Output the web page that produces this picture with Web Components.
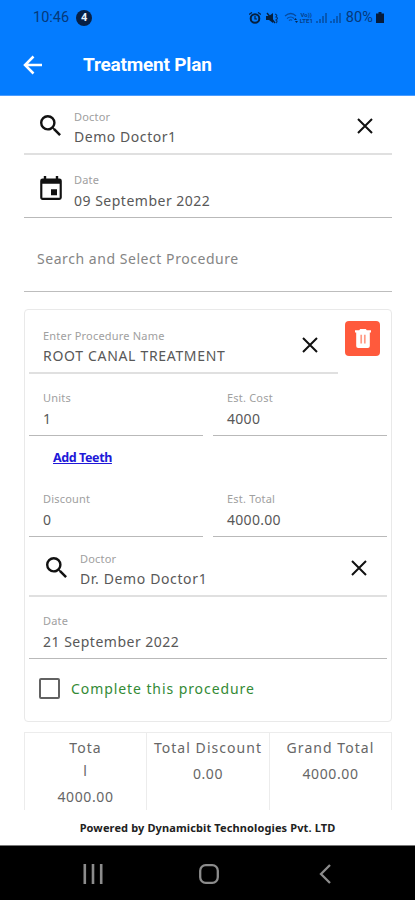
<!DOCTYPE html>
<html lang="en">
<head>
<meta charset="utf-8">
<title>Treatment Plan</title>
<style>
  html, body { margin: 0; height: 100%; background: #fff; }
  body { font-family: "Noto Sans", "Open Sans", sans-serif; color: #555; }
</style>
</head>
<body>
<treatment-plan></treatment-plan>
<script>
const define = (name, html) => customElements.define(name, class extends HTMLElement {
  constructor() {
    super();
    const t = document.createElement('template');
    t.innerHTML = html;
    this.attachShadow({ mode: 'open' }).append(t.content.cloneNode(true));
  }
});

const icons = {
  search: '<svg viewBox="3 3 17.5 17.5" width="21" height="21"><path d="M15.5 14h-.79l-.28-.27A6.47 6.47 0 0 0 16 9.5 6.5 6.5 0 1 0 9.5 16c1.61 0 3.09-.59 4.23-1.57l.27.28v.79l5 4.99L20.49 19l-4.99-5zm-6 0a4.5 4.5 0 1 1 0-9 4.5 4.5 0 0 1 0 9z"/></svg>',
  calendar: '<svg viewBox="3 1 18 20" width="22" height="24"><path fill-rule="evenodd" d="M19 3h-1V1h-2v2H8V1H6v2H5a2 2 0 0 0-2 2v14c0 1.100.9 2 2 2h14a2 2 0 0 0 2-2V5a2 2 0 0 0-2-2zm.2 16.200H4.800V7.500h14.400zM12 12h5v5h-5z"/></svg>',
  close: '<svg viewBox="0 0 16 16" width="16" height="16"><path d="M1 1l14 14M15 1L1 15" stroke="#111" stroke-width="2" fill="none"/></svg>',
  trash: '<svg viewBox="0 0 16 19" width="16" height="19"><path fill="#fff" d="M5.200 0h5.600l1 1.200H16v2.200H0V1.200h4.200zM1.200 3.400h13.600V17a2 2 0 0 1-2 2H3.200a2 2 0 0 1-2-2z"/><path stroke="#ff9a85" stroke-width="1.700" d="M6.200 5.800v8.600M9.800 5.800v8.600"/></svg>',
  back: '<svg viewBox="0 0 20 20" width="20" height="20"><path d="M10.500 1.500L2 10l8.500 8.500M2 10h17" stroke="#fff" stroke-width="2.500" fill="none"/></svg>',
  alarm: '<svg viewBox="0 0 12 12" width="12" height="12"><path d="M0 2.500L3 .4M12 2.500L9 .4" stroke="#06264f" stroke-width="1.300"/><circle cx="6" cy="6.500" r="4.300" fill="none" stroke="#06203f" stroke-width="2"/><path d="M6 4v3h2" fill="none" stroke="#06203f" stroke-width="1.200"/></svg>',
  mute: '<svg viewBox="0 0 13 12" width="13" height="12"><path d="M0 4h3l4-3v10L3 8H0z" fill="#06203f"/><path d="M1 1l8 10" stroke="#06203f" stroke-width="1.400"/><path d="M9 2q3 1 1 3 3 1 0 3 2 1 0 3" fill="none" stroke="#06346f" stroke-width="1.200"/></svg>',
  wifi: '<svg viewBox="0 0 15 12" width="15" height="12"><path d="M1 4q6-5 11 0M3 6.500q4-3 7 0M5 8.500q2-1.500 3 0" fill="none" stroke="#084a9c" stroke-width="1.200"/><path d="M10 8l1.500-2L13 8zM11 9l1.500 2L14 9z" fill="#06264f"/></svg>',
  signal: '<svg viewBox="0 0 11 11" width="11" height="11"><path d="M1 11V9M4 11V7M7 11V4M10 11V1" stroke="#074590" stroke-width="1.300"/></svg>',
  battery: '<svg viewBox="0 0 8 11" width="8" height="11"><path d="M2.500 0h3v1.500H8V11H0V1.500h2.500z" fill="#061c3c"/></svg>',
  recents: '<svg viewBox="0 0 20 20" width="20" height="20"><path d="M1.800 0v20M10 0v20M18.200 0v20" stroke="#8c8c8c" stroke-width="2.600"/></svg>',
  home: '<svg viewBox="0 0 20 20" width="20" height="20"><rect x="1.200" y="1.200" width="17.600" height="17.600" rx="5.500" fill="none" stroke="#8c8c8c" stroke-width="2.300"/></svg>',
  prev: '<svg viewBox="0 0 12 20" width="12" height="20"><path d="M11 1L2 10l9 9" fill="none" stroke="#8c8c8c" stroke-width="2.300"/></svg>'
};

customElements.define('ui-icon', class extends HTMLElement {
  constructor() {
    super();
    this.attachShadow({ mode: 'open' });
  }
  connectedCallback() {
    this.shadowRoot.innerHTML = `<style>:host{display:inline-flex;flex:none;color:#111}svg{display:block;fill:#111}</style>${icons[this.getAttribute('name')]}`;
  }
});

define('status-bar', `
<style>
  :host { display: flex; align-items: center; height: 34px; padding: 1px 31px 0 33px; box-sizing: border-box;
    font: 14.5px/20px Roboto, sans-serif; color: #06397a; }
  .count { width: 16px; height: 16px; border-radius: 50%; background: #072046; color: #e8f1ff;
    font: 700 11px/16px Roboto, sans-serif; text-align: center; margin-left: 7px; }
  .right { display: flex; align-items: center; margin-left: auto; }
  .lte { font: 700 6px/6px Roboto, sans-serif; text-align: center; width: 15px; color: #07408a; }
  .pct { margin: 0 3px 0 5px; letter-spacing: .1px; }
</style>
<span>10:46</span><span class="count">4</span>
<div class="right">
  <ui-icon name="alarm"></ui-icon><ui-icon name="mute" style="margin-left:5px"></ui-icon><ui-icon name="wifi" style="margin-left:5px"></ui-icon>
  <span class="lte">Vo)) LTE1</span><ui-icon name="signal" style="margin-left:2px"></ui-icon><ui-icon name="signal" style="margin-left:3px"></ui-icon>
  <span class="pct">80%</span><ui-icon name="battery"></ui-icon>
</div>`);

define('app-bar', `
<style>
  :host { display: flex; align-items: center; height: 62px; padding: 1px 0 0 23px; box-sizing: border-box; gap: 40px;
    border-bottom: 1px solid #4a9cff; }
  h1 { margin: 0; font: 700 19px/24px Roboto, sans-serif; color: #fff; letter-spacing: -.2px; }
</style>
<ui-icon name="back"></ui-icon><h1><slot></slot></h1>`);

define('form-field', `
<style>
  :host { display: flex; align-items: flex-end; box-sizing: border-box; height: var(--h, 62px);
    border-bottom: 1px solid #b9b9b9; padding: 0 20px 0 14px; }
  :host([soft]) { border-bottom: 2px solid #e0e0e0; }
  .texts { flex: 1; padding-bottom: 5px; min-width: 0; white-space: nowrap; }
  .label { font-size: 11px; line-height: 16px; margin-bottom: 2px; color: #a0a0a0; letter-spacing: .2px; }
  :host([soft]) .label { margin-bottom: 1px; }
  .value { font-size: 14px; line-height: 22px; color: #585858; letter-spacing: var(--vs, .3px); }
  ::slotted([slot=icon]) { margin: 0 13px 17px 2px; }
  ::slotted([slot=action]) { margin-bottom: 19px; }
</style>
<slot name="icon"></slot>
<div class="texts"><div class="label"><slot name="label"></slot></div><div class="value"><slot></slot></div></div>
<slot name="action"></slot>`);

define('search-field', `
<style>
  :host { display: flex; align-items: center; height: 74px; box-sizing: border-box; padding: 7px 14px 0 13px;
    border-bottom: 1px solid #bdbdbd; font-size: 14px; color: #858585; letter-spacing: .55px; }
  slot { display: block; }
</style><slot></slot>`);

define('delete-button', `
<style>
  :host { display: flex; width: 35px; height: 35px; border-radius: 4px; background: #ff5a3c; align-items: center; justify-content: center; }
</style><ui-icon name="trash"></ui-icon>`);

define('check-row', `
<style>
  :host { display: flex; align-items: center; height: 59px; padding-left: 10px; gap: 11px; color: #338a35; font-size: 14px; letter-spacing: .92px; }
  .box { width: 21px; height: 21px; box-sizing: border-box; border: 2px solid #626262; border-radius: 2px; }
</style><span class="box"></span><span><slot></slot></span>`);

define('procedure-card', `
<style>
  :host { display: block; box-sizing: border-box; height: 413px; margin-top: 17px; border: 1px solid #e9e9e9; border-radius: 4px; padding: 0 4px; }
  .top { display: flex; justify-content: space-between; }
  .top form-field { width: 309px; }
  .top delete-button { margin: 11px 7px 0 0; }
  .pair { display: grid; grid-template-columns: 174px 174px; gap: 10px; }
  .link { display: flex; align-items: center; height: 43px; padding-left: 24px; }
  a { font-size: 12.500px; font-weight: 700; color: #2118d8; text-decoration: underline; letter-spacing: -.4px; }
</style>
<div class="top">
  <form-field soft style="--h:64px;--vs:.68px"><span slot="label">Enter Procedure Name</span>ROOT CANAL TREATMENT<ui-icon slot="action" name="close"></ui-icon></form-field>
  <delete-button></delete-button>
</div>
<div class="pair">
  <form-field><span slot="label">Units</span>1</form-field>
  <form-field><span slot="label">Est. Cost</span>4000</form-field>
</div>
<div class="link"><a>Add Teeth</a></div>
<div class="pair">
  <form-field style="--h:58px"><span slot="label">Discount</span>0</form-field>
  <form-field style="--h:58px"><span slot="label">Est. Total</span>4000.00</form-field>
</div>
<form-field soft style="--h:60px;--vs:.63px"><ui-icon slot="icon" name="search" style="margin-left:3px"></ui-icon><span slot="label">Doctor</span>Dr. Demo Doctor1<ui-icon slot="action" name="close"></ui-icon></form-field>
<form-field style="--vs:.5px"><span slot="label">Date</span>21 September 2022</form-field>
<check-row>Complete this procedure</check-row>`);

define('total-cell', `
<style>
  :host { display: block; border-right: 1px solid #ececec; padding-top: 3px; text-align: center; font-size: 14px; color: #666; letter-spacing: .6px; }
  .name { line-height: 23px; letter-spacing: 1.050px; }
  .sum { line-height: 23px; margin-top: 3px; }
</style>
<div class="name"><slot name="name"></slot></div><div class="sum"><slot></slot></div>`);

define('totals-row', `
<style>
  :host { display: grid; grid-template-columns: 122px 123px 122px; box-sizing: border-box; width: 368px; height: 90px; margin-top: 10px;
    border-top: 1px solid #ececec; border-left: 1px solid #ececec; }
</style>
<total-cell><span slot="name">Tota<br>l</span>4000.00</total-cell>
<total-cell><span slot="name">Total Discount</span>0.00</total-cell>
<total-cell><span slot="name">Grand Total</span>4000.00</total-cell>`);

define('nav-bar', `
<style>
  :host { display: flex; align-items: center; box-sizing: border-box; height: 55px; background: #000; border-top: 1px solid #777;
    padding: 2px 0 0 83px; }
  ui-icon:nth-of-type(2) { margin: 0 100px 0 96px; }
</style>
<ui-icon name="recents"></ui-icon><ui-icon name="home"></ui-icon><ui-icon name="prev"></ui-icon>`);

define('treatment-plan', `
<style>
  :host { display: flex; flex-direction: column; width: 415px; height: 900px; overflow: hidden; background: #fff; }
  header { background: #047cff; }
  main { flex: 1; min-height: 0; overflow: hidden; padding: 0 23px 0 24px; }
  footer { height: 35px; font-size: 11px; font-weight: 700; line-height: 35px; text-align: center; color: #222; letter-spacing: .12px; }
</style>
<header><status-bar></status-bar><app-bar>Treatment Plan</app-bar></header>
<main>
  <form-field soft style="--h:59px;--vs:.55px"><ui-icon slot="icon" name="search"></ui-icon><span slot="label">Doctor</span>Demo Doctor1<ui-icon slot="action" name="close" style="margin-right:-1px"></ui-icon></form-field>
  <form-field style="--h:63px;--vs:.5px"><ui-icon slot="icon" name="calendar" style="margin-right:12px"></ui-icon><span slot="label">Date</span>09 September 2022</form-field>
  <search-field>Search and Select Procedure</search-field>
  <procedure-card></procedure-card>
  <totals-row></totals-row>
</main>
<footer>Powered by Dynamicbit Technologies Pvt. LTD</footer>
<nav-bar></nav-bar>`);
</script>
</body>
</html>
